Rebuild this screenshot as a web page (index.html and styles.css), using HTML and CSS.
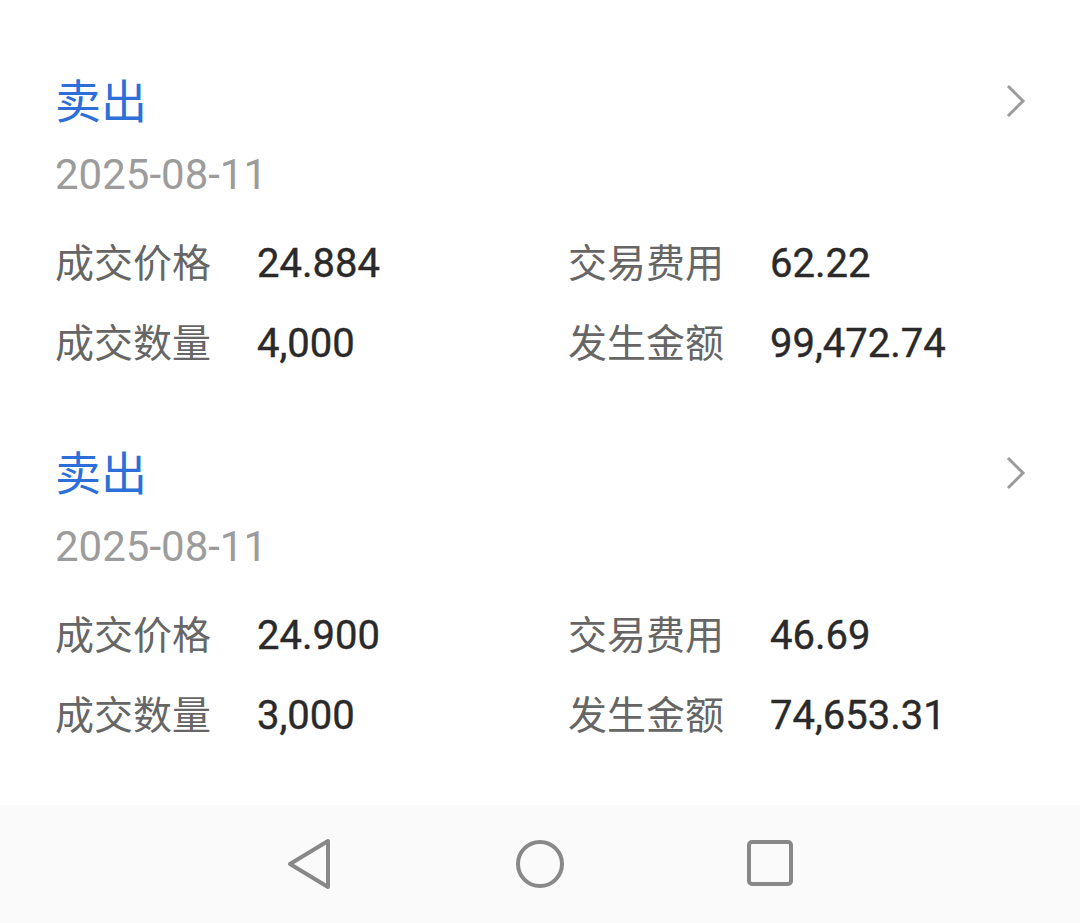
FILE: index.html
```html
<!DOCTYPE html>
<html lang="zh-CN">
<head>
<meta charset="utf-8">
<title>成交明细</title>
<link rel="stylesheet" href="styles.css">
</head>
<body>
<main class="list">
  <section class="card">
    <div class="head">
      <span class="title">卖出</span>
      <svg class="chev" width="22" height="34" viewBox="0 0 22 34"><path d="M3 2 L18 17 L3 32" fill="none" stroke="#9b9b9b" stroke-width="3"/></svg>
    </div>
    <div class="date">2025-08-11</div>
    <div class="grid">
      <div class="cell"><span class="label">成交价格</span><span class="value">24.884</span></div>
      <div class="cell"><span class="label">交易费用</span><span class="value">62.22</span></div>
      <div class="cell"><span class="label">成交数量</span><span class="value">4,000</span></div>
      <div class="cell"><span class="label">发生金额</span><span class="value">99,472.74</span></div>
    </div>
  </section>
  <section class="card">
    <div class="head">
      <span class="title">卖出</span>
      <svg class="chev" width="22" height="34" viewBox="0 0 22 34"><path d="M3 2 L18 17 L3 32" fill="none" stroke="#9b9b9b" stroke-width="3"/></svg>
    </div>
    <div class="date">2025-08-11</div>
    <div class="grid">
      <div class="cell"><span class="label">成交价格</span><span class="value">24.900</span></div>
      <div class="cell"><span class="label">交易费用</span><span class="value">46.69</span></div>
      <div class="cell"><span class="label">成交数量</span><span class="value">3,000</span></div>
      <div class="cell"><span class="label">发生金额</span><span class="value">74,653.31</span></div>
    </div>
  </section>
</main>
<nav class="navbar">
  <svg width="48" height="52" viewBox="0 0 48 52"><path d="M42 3 L42 49 L4 26 Z" fill="none" stroke="#888" stroke-width="4" stroke-linejoin="round"/></svg>
  <svg width="48" height="52" viewBox="0 0 48 52"><circle cx="24" cy="26" r="22" fill="none" stroke="#888" stroke-width="4"/></svg>
  <svg width="48" height="52" viewBox="0 0 48 52"><rect x="3" y="4" width="42" height="42" rx="3" fill="none" stroke="#888" stroke-width="4"/></svg>
</nav>
</body>
</html>
```
FILE: styles.css
```css
html, body {
  margin: 0;
  padding: 0;
  background: #ffffff;
}
body {
  width: 1080px;
  height: 923px;
  overflow: hidden;
  font-family: Roboto, "Noto Sans CJK SC", sans-serif;
}
.list {
  height: 805px;
  box-sizing: border-box;
  padding: 68px 53px 0 55px;
}
.card {
  margin-bottom: 57px;
}
.head {
  display: flex;
  justify-content: space-between;
  align-items: center;
  height: 60px;
}
.title {
  font-family: "Noto Sans CJK SC", sans-serif;
  font-size: 46px;
  line-height: 60px;
  color: #2c6fd8;
}
.chev {
  display: block;
  margin-top: 6px;
}
.date {
  margin-top: 17px;
  height: 60px;
  line-height: 60px;
  font-size: 42px;
  color: #9c9c9c;
}
.grid {
  margin-top: 18px;
  display: grid;
  grid-template-columns: 513px 1fr;
  grid-auto-rows: 80px;
}
.cell {
  display: flex;
  align-items: center;
}
.label {
  width: 202px;
  padding-bottom: 7px;
  font-family: "Noto Sans CJK SC", sans-serif;
  font-size: 39px;
  color: #666666;
}
.value {
  font-family: Roboto, sans-serif;
  font-weight: 400;
  font-size: 40px;
  color: #2a2a2a;
  -webkit-text-stroke: 0.4px #2a2a2a;
}
.navbar {
  height: 118px;
  background: #fafafa;
  display: flex;
  justify-content: center;
  align-items: center;
  gap: 182px;
}
.navbar svg {
  display: block;
}
```
